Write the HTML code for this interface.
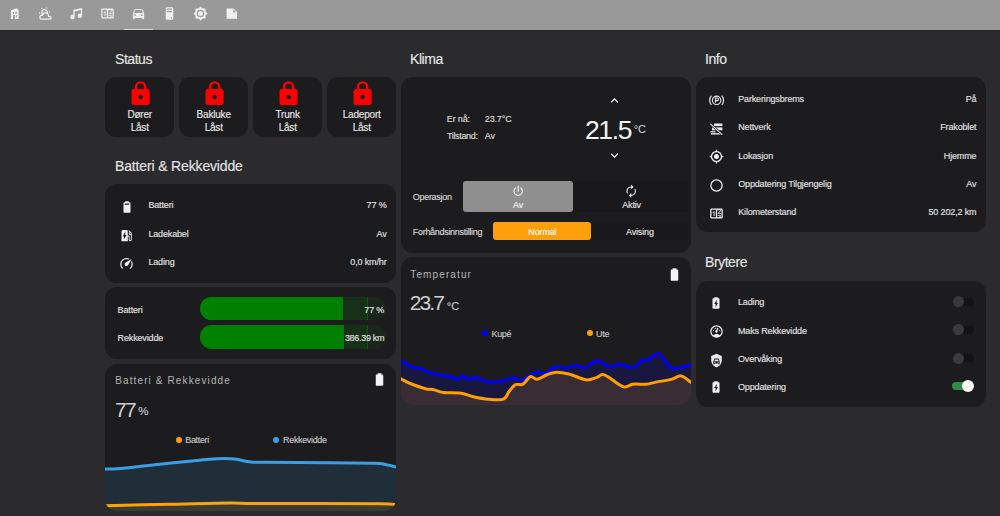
<!DOCTYPE html>
<html><head><meta charset="utf-8">
<style>
*{margin:0;padding:0;box-sizing:border-box}
html,body{width:1000px;height:516px;overflow:hidden;background:#2b2b2d;font-family:"Liberation Sans",sans-serif;color:#e1e1e1}
.a{position:absolute}
.t{position:absolute;white-space:nowrap;line-height:1;-webkit-text-stroke:0.15px currentColor}
.hdr{position:absolute;left:0;top:0;width:1000px;height:30px;background:#999999;border-bottom:1px solid #242426;height:31px}
.hi{position:absolute;width:15px;height:15px;fill:#f0f0f0}
.card{position:absolute;background:#1c1c1e;border-radius:12px;overflow:hidden}
.h{font-size:14px;letter-spacing:-0.45px;color:#e4e4e4}
.s{font-size:9px;color:#e1e1e1;letter-spacing:-0.15px}
.ic{position:absolute;fill:#f0f0f0}
.r{text-align:right}
.mgn{-webkit-text-stroke:0 !important;font-size:10px;letter-spacing:1.12px;color:#b4b4b4}
.big{-webkit-text-stroke:0 !important;font-size:21px;color:#cfcfcf;letter-spacing:-1.6px}
.unit{font-size:12px;color:#c8c8c8}
.dot{width:6px;height:6px;border-radius:50%}
.kl{color:#dcdcdc}
.tgt{-webkit-text-stroke:0 !important;font-size:26.5px;letter-spacing:-1.4px;color:#f4f4f4}
.tgu{-webkit-text-stroke:0 !important;font-size:11px;color:#d8d8d8}
.op{letter-spacing:-0.3px;color:#d8d8d8}
.bt{text-align:center}
.lg{color:#c4c4c4;letter-spacing:-0.35px}
.lk{font-size:10px;line-height:12.8px;text-align:center;color:#e6e6e6;letter-spacing:-0.2px}
</style></head><body>
<div class="hdr">
 <!-- home-city -->
 <svg class="a" style="left:0;top:0;width:30px;height:30px" viewBox="0 0 30 30"><path d="M10.9,10.3L16.6,8.2L18.7,10.3V18.9H10.9Z" fill="#f0f0f0"/><rect x="12.8" y="11.8" width="1.4" height="2" fill="#9b9b9b"/><rect x="15.4" y="11.8" width="1.4" height="2" fill="#9b9b9b"/><rect x="13" y="15" width="2" height="3.9" fill="#9b9b9b"/><rect x="15.9" y="15.2" width="1" height="2" fill="#9b9b9b"/></svg>
 <!-- weather partly cloudy -->
 <svg class="hi" style="left:38px;top:6px" viewBox="0 0 24 24"><path d="M12.74,5.47C15.1,6.5 16.35,9.03 15.92,11.46C17.19,12.56 18,14.19 18,16V16.17C18.31,16.06 18.65,16 19,16A3,3 0 0,1 22,19A3,3 0 0,1 19,22H6A4,4 0 0,1 2,18A4,4 0 0,1 6,14H6.27C5,12.45 4.6,10.24 5.5,8.26C6.72,5.5 9.97,4.24 12.74,5.47M11.93,7.3C10.16,6.5 8.09,7.31 7.31,9.07C6.85,10.09 6.93,11.22 7.41,12.13C8.5,10.83 10.16,10 12,10C12.7,10 13.38,10.12 14,10.34C13.94,9.06 13.18,7.86 11.93,7.3M13.55,3.64C13,3.4 12.45,3.23 11.88,3.12L14.37,1.82L15.27,4.71C14.76,4.29 14.19,3.93 13.55,3.64M6.09,4.44C5.6,4.79 5.17,5.19 4.8,5.63L4.91,2.82L7.87,3.5C7.25,3.71 6.65,4.03 6.09,4.44M18,9.71C17.91,9.12 17.78,8.55 17.59,8L19.97,9.5L17.92,11.73C18.03,11.08 18.05,10.4 18,9.71M3.04,11.3C3.11,11.9 3.24,12.47 3.43,13L1.06,11.5L3.1,9.28C3,9.93 2.97,10.61 3.04,11.3M19,18H16V16A4,4 0 0,0 12,12A4,4 0 0,0 8,16H6A2,2 0 0,0 4,18A2,2 0 0,0 6,20H19A1,1 0 0,0 20,19A1,1 0 0,0 19,18Z"/></svg>
 <svg class="hi" style="left:69px;top:6px" viewBox="0 0 24 24"><path d="M21,3V15.5A3.5,3.5 0 0,1 17.5,19A3.5,3.5 0 0,1 14,15.5A3.5,3.5 0 0,1 17.5,12C18.04,12 18.55,12.12 19,12.34V6.47L9,8.6V17.5A3.5,3.5 0 0,1 5.5,21A3.5,3.5 0 0,1 2,17.5A3.5,3.5 0 0,1 5.5,14C6.04,14 6.55,14.12 7,14.34V6L21,3Z"/></svg>
 <svg class="hi" style="left:100px;top:6px" viewBox="0 0 24 24"><path d="M4,4H20A2,2 0 0,1 22,6V18A2,2 0 0,1 20,20H4A2,2 0 0,1 2,18V6A2,2 0 0,1 4,4M4,6V18H11V6H4M20,18V6H18.76C19,6.54 18.95,7.07 18.95,7.13C18.88,7.8 18.41,8.5 18.24,8.75L15.91,11.3L19.23,11.28L19.24,12.5L14.04,12.47L14,11.47C14,11.47 17.05,8.24 17.2,7.95C17.34,7.67 17.91,6 16.5,6C15.27,6.05 15.41,7.3 15.41,7.3L13.87,7.31C13.87,7.31 13.88,6.65 14.25,6H13V18H15.58L15.57,17.14L16.54,17.13C16.54,17.13 17.45,16.97 17.46,16.08C17.5,15.08 16.65,15.08 16.5,15.08C16.37,15.08 15.43,15.13 15.43,15.95H13.91C13.91,15.95 13.95,13.89 16.5,13.89C19.1,13.89 18.96,15.91 18.96,15.91C18.96,15.91 19,17.16 17.85,17.63L18.37,18H20M8.92,16H7.42V10.2L5.62,10.76V9.53L8.76,8.41H8.92V16Z"/></svg>
 <svg class="hi" style="left:131px;top:6px" viewBox="0 0 24 24"><path d="M5,11L6.5,6.5H17.5L19,11M17.5,16A1.5,1.5 0 0,1 16,14.5A1.5,1.5 0 0,1 17.5,13A1.5,1.5 0 0,1 19,14.5A1.5,1.5 0 0,1 17.5,16M6.5,16A1.5,1.5 0 0,1 5,14.5A1.5,1.5 0 0,1 6.5,13A1.5,1.5 0 0,1 8,14.5A1.5,1.5 0 0,1 6.5,16M18.92,6C18.72,5.42 18.16,5 17.5,5H6.5C5.84,5 5.28,5.42 5.08,6L3,12V20A1,1 0 0,0 4,21H5A1,1 0 0,0 6,20V19H18V20A1,1 0 0,0 19,21H20A1,1 0 0,0 21,20V12L18.92,6Z"/></svg>
 <svg class="hi" style="left:162px;top:6px" viewBox="0 0 24 24"><path d="M8,2H16A2,2 0 0,1 18,4V20A2,2 0 0,1 16,22H8A2,2 0 0,1 6,20V4A2,2 0 0,1 8,2M8,4V6H16V4H8M16,8H8V10H16V8M16,18H14V20H16V18Z"/></svg>
 <svg class="hi" style="left:193px;top:6px" viewBox="0 0 24 24"><path d="M12,8A4,4 0 0,0 8,12A4,4 0 0,0 12,16A4,4 0 0,0 16,12A4,4 0 0,0 12,8M12,18A6,6 0 0,1 6,12A6,6 0 0,1 12,6A6,6 0 0,1 18,12A6,6 0 0,1 12,18M20,8.69V4H15.31L12,0.69L8.69,4H4V8.69L0.69,12L4,15.31V20H8.69L12,23.31L15.31,20H20V15.31L23.31,12L20,8.69Z"/></svg>
 <svg class="a" style="left:220px;top:0;width:24px;height:30px" viewBox="220 0 24 30"><path d="M226.6,8.4H233.4L237,12V18.7H226.6Z" fill="#f0f0f0"/><path d="M233.3,9.6V12.2H235.8Z" fill="#8c8c8c"/></svg>
 <div class="a" style="left:124.3px;top:28.5px;width:29px;height:1.5px;background:#dadada"></div>
</div>

<!-- ============ COLUMN 1 ============ -->
<div class="t h" style="left:115px;top:52px">Status</div>

<div class="card" style="left:105.4px;top:77px;width:68.6px;height:60px;border-radius:11px"></div>
<svg class="a" style="left:126.50px;top:79.5px;width:27.2px;height:27.2px" viewBox="0 0 24 24"><path fill="#ff0000" d="M12,17A2,2 0 0,0 14,15C14,13.89 13.1,13 12,13A2,2 0 0,0 10,15A2,2 0 0,0 12,17M18,8A2,2 0 0,1 20,10V20A2,2 0 0,1 18,22H6A2,2 0 0,1 4,20V10C4,8.89 4.9,8 6,8H7V6A5,5 0 0,1 12,1A5,5 0 0,1 17,6V8H18M12,3A3,3 0 0,0 9,6V8H15V6A3,3 0 0,0 12,3Z"/></svg>
<div class="t lk" style="left:105.4px;width:68.6px;top:109.4px">Dører<br>Låst</div>
<div class="card" style="left:179.4px;top:77px;width:68.6px;height:60px;border-radius:11px"></div>
<svg class="a" style="left:200.50px;top:79.5px;width:27.2px;height:27.2px" viewBox="0 0 24 24"><path fill="#ff0000" d="M12,17A2,2 0 0,0 14,15C14,13.89 13.1,13 12,13A2,2 0 0,0 10,15A2,2 0 0,0 12,17M18,8A2,2 0 0,1 20,10V20A2,2 0 0,1 18,22H6A2,2 0 0,1 4,20V10C4,8.89 4.9,8 6,8H7V6A5,5 0 0,1 12,1A5,5 0 0,1 17,6V8H18M12,3A3,3 0 0,0 9,6V8H15V6A3,3 0 0,0 12,3Z"/></svg>
<div class="t lk" style="left:179.4px;width:68.6px;top:109.4px">Bakluke<br>Låst</div>
<div class="card" style="left:253.4px;top:77px;width:68.6px;height:60px;border-radius:11px"></div>
<svg class="a" style="left:274.50px;top:79.5px;width:27.2px;height:27.2px" viewBox="0 0 24 24"><path fill="#ff0000" d="M12,17A2,2 0 0,0 14,15C14,13.89 13.1,13 12,13A2,2 0 0,0 10,15A2,2 0 0,0 12,17M18,8A2,2 0 0,1 20,10V20A2,2 0 0,1 18,22H6A2,2 0 0,1 4,20V10C4,8.89 4.9,8 6,8H7V6A5,5 0 0,1 12,1A5,5 0 0,1 17,6V8H18M12,3A3,3 0 0,0 9,6V8H15V6A3,3 0 0,0 12,3Z"/></svg>
<div class="t lk" style="left:253.4px;width:68.6px;top:109.4px">Trunk<br>Låst</div>
<div class="card" style="left:327.4px;top:77px;width:68.6px;height:60px;border-radius:11px"></div>
<svg class="a" style="left:348.50px;top:79.5px;width:27.2px;height:27.2px" viewBox="0 0 24 24"><path fill="#ff0000" d="M12,17A2,2 0 0,0 14,15C14,13.89 13.1,13 12,13A2,2 0 0,0 10,15A2,2 0 0,0 12,17M18,8A2,2 0 0,1 20,10V20A2,2 0 0,1 18,22H6A2,2 0 0,1 4,20V10C4,8.89 4.9,8 6,8H7V6A5,5 0 0,1 12,1A5,5 0 0,1 17,6V8H18M12,3A3,3 0 0,0 9,6V8H15V6A3,3 0 0,0 12,3Z"/></svg>
<div class="t lk" style="left:327.4px;width:68.6px;top:109.4px">Ladeport<br>Låst</div>

<div class="t h" style="left:115px;top:158.7px;letter-spacing:-0.15px">Batteri &amp; Rekkevidde</div>

<div class="card" style="left:105.4px;top:184px;width:290.6px;height:99px"></div>
<div class="card" style="left:105.4px;top:287.4px;width:290.6px;height:71.6px"></div>
<div class="card" style="left:105.4px;top:363.5px;width:290.6px;height:147.5px"><svg class="a" style="left:0;top:0" width="290.6" height="147.5" viewBox="105.4 363.5 290.6 147.5">
<path d="M104.0,468.6 C106.7,468.5 110.7,468.8 120.0,468.0 C129.3,467.2 146.7,465.1 160.0,463.7 C173.3,462.3 190.3,460.6 200.0,459.7 C209.7,458.8 212.2,458.4 218.0,458.2 C223.8,458.0 229.7,458.0 235.0,458.5 C240.3,459.0 245.0,460.8 250.0,461.3 C255.0,461.9 252.5,461.7 265.0,461.8 C277.5,461.9 306.7,462.1 325.0,462.2 C343.3,462.3 365.0,462.4 375.0,462.7 C385.0,462.9 381.2,463.0 385.0,463.7 C388.8,464.4 395.8,466.4 398.0,467.0 L398,512 L104,512 Z" fill="#202e3a"/>
<path d="M104.0,505.2 C115.0,505.0 149.0,504.2 170.0,503.8 C191.0,503.4 215.0,502.7 230.0,502.6 C245.0,502.5 235.0,502.9 260.0,503.0 C285.0,503.1 357.0,503.0 380.0,503.3 C403.0,503.6 395.0,504.7 398.0,505.0 L398,512 L104,512 Z" fill="#3a3c34"/>
<path d="M104.0,468.6 C106.7,468.5 110.7,468.8 120.0,468.0 C129.3,467.2 146.7,465.1 160.0,463.7 C173.3,462.3 190.3,460.6 200.0,459.7 C209.7,458.8 212.2,458.4 218.0,458.2 C223.8,458.0 229.7,458.0 235.0,458.5 C240.3,459.0 245.0,460.8 250.0,461.3 C255.0,461.9 252.5,461.7 265.0,461.8 C277.5,461.9 306.7,462.1 325.0,462.2 C343.3,462.3 365.0,462.4 375.0,462.7 C385.0,462.9 381.2,463.0 385.0,463.7 C388.8,464.4 395.8,466.4 398.0,467.0" fill="none" stroke="#3a9ee4" stroke-width="3" stroke-linecap="round" stroke-linejoin="round"/>
<path d="M104.0,505.2 C115.0,505.0 149.0,504.2 170.0,503.8 C191.0,503.4 215.0,502.7 230.0,502.6 C245.0,502.5 235.0,502.9 260.0,503.0 C285.0,503.1 357.0,503.0 380.0,503.3 C403.0,503.6 395.0,504.7 398.0,505.0" fill="none" stroke="#ffa10a" stroke-width="3" stroke-linecap="round" stroke-linejoin="round"/>
</svg></div>
<div class="t mgn" style="left:115.2px;top:375.9px">Batteri &amp; Rekkevidde</div>
<svg class="ic" style="left:372px;top:372.4px;width:15px;height:15px" viewBox="0 0 24 24"><path fill="#f4f4f4" d="M16.67,4H15V2H9V4H7.33A1.33,1.33 0 0,0 6,5.33V20.67C6,21.4 6.6,22 7.33,22H16.67A1.33,1.33 0 0,0 18,20.67V5.33C18,4.6 17.4,4 16.67,4Z"/></svg>
<div class="t big" style="left:115px;top:398.5px">77</div>
<div class="t unit" style="left:138.3px;top:406.2px;font-size:11.5px">%</div>
<div class="a dot" style="left:175.8px;top:436.6px;background:#ffa10a"></div>
<div class="t s lg" style="left:185.3px;top:436px">Batteri</div>
<div class="a dot" style="left:273.3px;top:436.6px;background:#3a9ee4"></div>
<div class="t s lg" style="left:283.1px;top:436px">Rekkevidde</div>


<!-- entities card col1 -->
<svg class="ic" style="left:119.6px;top:200px;width:14px;height:14px" viewBox="0 0 24 24"><path d="M16.67,4C17.4,4 18,4.6 18,5.33V20.67C18,21.4 17.4,22 16.67,22H7.33C6.6,22 6,21.4 6,20.67V5.33C6,4.6 6.6,4 7.33,4H9V2H15V4H16.67M16,8V6H8V8H16Z"/></svg>
<svg class="ic" style="left:119.4px;top:228.1px;width:15px;height:15px" viewBox="0 0 24 24"><path d="M19.77,7.23L19.78,7.22L16.06,3.5L15,4.56L17.11,6.67C16.17,7.03 15.5,7.93 15.5,9A2.5,2.5 0 0,0 18,11.5C18.36,11.5 18.69,11.42 19,11.29V18.5A1,1 0 0,1 18,19.5A1,1 0 0,1 17,18.5V14A2,2 0 0,0 15,12H14V5A2,2 0 0,0 12,3H6A2,2 0 0,0 4,5V21H14V13.5H15.5V18.5A2.5,2.5 0 0,0 18,21A2.5,2.5 0 0,0 20.5,18.5V9C20.5,8.31 20.22,7.68 19.77,7.23M18,10A1,1 0 0,1 17,9A1,1 0 0,1 18,8A1,1 0 0,1 19,9A1,1 0 0,1 18,10M8,18V13.5H6L10,6V11H12L8,18Z"/></svg>
<svg class="ic" style="left:119.35px;top:256px;width:15px;height:15px" viewBox="0 0 24 24"><path d="M12,16A3,3 0 0,1 9,13C9,11.88 9.61,10.9 10.5,10.39L20.21,4.77L14.68,14.35C14.18,15.33 13.17,16 12,16M12,3C13.81,3 15.5,3.5 16.97,4.32L14.87,5.53C14,5.19 13,5 12,5A8,8 0 0,0 4,13C4,15.21 4.89,17.21 6.34,18.65H6.35C6.74,19.04 6.74,19.67 6.35,20.06C5.96,20.45 5.32,20.45 4.93,20.07V20.07C3.12,18.26 2,15.76 2,13A10,10 0 0,1 12,3M22,13C22,15.76 20.88,18.26 19.07,20.07V20.07C18.68,20.45 18.050,20.45 17.66,20.06C17.27,19.67 17.27,19.04 17.66,18.65V18.65C19.11,17.2 20,15.21 20,13C20,12 19.81,11 19.46,10.1L20.67,8C21.5,9.5 22,11.18 22,13Z"/></svg>
<div class="t s" style="left:148.4px;top:201.4px">Batteri</div>
<div class="t s" style="left:148.4px;top:229.5px">Ladekabel</div>
<div class="t s" style="left:148.4px;top:257.9px">Lading</div>
<div class="t s r" style="right:613.5px;top:201.4px">77 %</div>
<div class="t s r" style="right:613.5px;top:229.5px">Av</div>
<div class="t s r" style="right:613.5px;top:257.9px">0,0 km/hr</div>

<!-- bar card -->
<div class="t s" style="left:117.6px;top:305.6px">Batteri</div>
<div class="t s" style="left:117.6px;top:334.1px">Rekkevidde</div>
<div class="a" style="left:199.5px;top:297px;width:186.5px;height:23.4px;border-radius:11.7px;overflow:hidden;background:#1a261b">
  <div class="a" style="left:0;top:0;width:168.3px;height:100%;background:#163117"></div>
  <div class="a" style="left:0;top:0;width:143.7px;height:100%;background:#008000"></div>
  <div class="a" style="left:167.8px;top:0;width:1px;height:100%;background:#0a5a0d"></div>
</div>
<div class="a" style="left:199.5px;top:325.3px;width:186.5px;height:23.4px;border-radius:11.7px;overflow:hidden;background:#1a261b">
  <div class="a" style="left:0;top:0;width:168.3px;height:100%;background:#163117"></div>
  <div class="a" style="left:0;top:0;width:144.4px;height:100%;background:#008000"></div>
  <div class="a" style="left:167.8px;top:0;width:1px;height:100%;background:#0a5a0d"></div>
</div>
<div class="t s r" style="right:615.8px;top:306px">77 %</div>
<div class="t s r" style="right:615.8px;top:334.3px;letter-spacing:-0.3px">386.39 km</div>


<!-- ============ COLUMN 2 ============ -->
<div class="t h" style="left:410px;top:52px">Klima</div>
<div class="card" style="left:400.6px;top:77px;width:290.6px;height:175.5px"></div>
<div class="t s kl" style="left:446.8px;top:114.5px">Er nå:</div>
<div class="t s kl" style="left:484.8px;top:114.6px">23.7°C</div>
<div class="t s kl" style="left:447px;top:131.9px;letter-spacing:-0.35px">Tilstand:</div>
<div class="t s kl" style="left:484.8px;top:131.9px">Av</div>
<svg class="ic" style="left:606.9px;top:93.2px;width:15px;height:15px" viewBox="0 0 24 24"><path d="M7.41,15.41L12,10.83L16.59,15.41L18,14L12,8L6,14L7.41,15.41Z"/></svg>
<svg class="ic" style="left:606.9px;top:147.6px;width:15px;height:15px" viewBox="0 0 24 24"><path d="M7.41,8.58L12,13.17L16.59,8.58L18,10L12,16L6,10L7.41,8.58Z"/></svg>
<div class="t tgt" style="left:585px;top:116.5px">21.5</div>
<div class="t tgu" style="left:633.7px;top:123.6px">°C</div>
<div class="t s op" style="left:412.8px;top:192.9px">Operasjon</div>
<div class="t s op" style="left:412.8px;top:227.6px">Forhåndsinnstilling</div>
<div class="a" style="left:463px;top:181.3px;width:225.2px;height:30.4px;background:#19191b;border-radius:3px"></div>
<div class="a" style="left:463px;top:181.3px;width:110px;height:30.4px;background:#8f8f8f;border-radius:3px"></div>
<svg class="ic" style="left:511.2px;top:183.8px;width:14.4px;height:14.4px" viewBox="0 0 24 24"><path fill="#f2f2f2" d="M16.56,5.44L15.11,6.89C16.84,7.94 18,9.83 18,12A6,6 0 0,1 12,18A6,6 0 0,1 6,12C6,9.83 7.16,7.94 8.88,6.88L7.44,5.44C5.36,6.88 4,9.28 4,12A8,8 0 0,0 12,20A8,8 0 0,0 20,12C20,9.28 18.64,6.88 16.56,5.44M13,3H11V13H13"/></svg>
<div class="t s bt" style="left:463px;width:110px;top:201.1px;color:#f0f0f0">Av</div>
<svg class="ic" style="left:624.4px;top:183.8px;width:14.4px;height:14.4px" viewBox="0 0 24 24"><path fill="#e6e6e6" d="M12,6V9L16,5L12,1V4A8,8 0 0,0 4,12C4,13.57 4.46,15.03 5.24,16.26L6.7,14.8C6.25,13.97 6,13 6,12A6,6 0 0,1 12,6M18.76,7.74L17.3,9.2C17.74,10.04 18,11 18,12A6,6 0 0,1 12,18V15L8,19L12,23V20A8,8 0 0,0 20,12C20,10.43 19.54,8.97 18.76,7.74Z"/></svg>
<div class="t s bt" style="left:573px;width:117.2px;top:201.1px">Aktiv</div>
<div class="a" style="left:493.3px;top:221.9px;width:194.9px;height:18.6px;background:#19191b;border-radius:3px"></div>
<div class="a" style="left:493.3px;top:221.9px;width:98.2px;height:18.6px;background:#ff9f0c;border-radius:3px"></div>
<div class="t s bt" style="left:493.3px;width:98.2px;top:228px;color:#fafafa">Normal</div>
<div class="t s bt" style="left:591.5px;width:96.7px;top:228px">Avising</div>

<div class="card" style="left:400.6px;top:257px;width:290.6px;height:148px"><svg class="a" style="left:0;top:0" width="290.6" height="148" viewBox="400.6 257 290.6 148">
<path d="M398.0,359.5 C398.5,359.8 398.5,359.7 401.0,361.0 C403.5,362.3 410.0,366.3 413.0,367.4 C416.0,368.5 416.8,367.0 419.0,367.7 C421.2,368.4 423.8,370.5 426.5,371.5 C429.2,372.5 432.5,372.9 435.5,373.7 C438.5,374.4 442.2,375.6 444.5,376.0 C446.8,376.4 447.1,375.4 449.0,376.0 C450.9,376.6 453.6,379.3 455.7,379.3 C457.8,379.3 459.4,376.0 461.7,376.0 C463.9,376.0 466.9,379.1 469.2,379.3 C471.4,379.6 473.1,377.4 475.2,377.5 C477.3,377.6 479.4,378.9 482.0,379.7 C484.6,380.5 487.5,382.2 491.0,382.3 C494.5,382.4 499.5,381.2 503.0,380.5 C506.5,379.8 509.5,377.9 512.0,377.8 C514.5,377.7 516.0,379.6 518.0,379.7 C520.0,379.8 521.5,379.8 524.0,378.7 C526.5,377.6 530.8,374.1 533.0,373.0 C535.2,371.9 535.5,372.2 537.5,372.2 C539.5,372.2 542.0,374.1 545.0,373.2 C548.0,372.3 552.3,367.6 555.7,366.8 C559.1,366.0 561.9,368.4 565.3,368.1 C568.7,367.8 572.8,365.2 576.0,365.2 C579.2,365.1 581.3,368.5 584.7,367.8 C588.1,367.1 592.2,360.9 596.4,360.8 C600.6,360.7 606.5,366.7 610.0,367.2 C613.5,367.7 614.0,363.9 617.7,363.9 C621.4,363.9 628.2,367.8 632.2,367.2 C636.2,366.6 639.5,361.1 641.9,360.0 C644.3,358.9 644.3,361.5 646.7,360.4 C649.1,359.3 653.8,354.1 656.4,353.6 C659.0,353.1 659.8,355.1 662.2,357.5 C664.6,359.9 667.9,366.2 671.0,367.8 C674.1,369.4 677.5,367.7 680.7,367.2 C683.9,366.7 688.2,365.2 690.3,364.7 C692.3,364.2 692.5,364.1 693.0,364.0 L693,406 L398,406 Z" fill="#0000ff" fill-opacity="0.15"/>
<path d="M398.0,377.5 C398.5,377.8 399.0,378.0 401.0,379.0 C403.0,380.0 406.0,381.9 410.0,383.5 C414.0,385.1 421.2,387.7 425.0,388.7 C428.8,389.7 429.5,388.9 432.5,389.5 C435.5,390.1 438.2,391.9 443.0,392.5 C447.8,393.1 456.0,392.5 461.0,393.2 C466.0,393.9 468.5,395.7 473.0,396.7 C477.5,397.7 483.0,398.8 488.0,399.2 C493.0,399.6 499.5,400.6 503.0,399.2 C506.5,397.8 507.0,393.4 509.0,391.0 C511.0,388.6 512.8,385.8 515.0,384.7 C517.2,383.6 520.0,385.5 522.5,384.2 C525.0,382.9 527.6,377.5 530.0,376.7 C532.4,375.9 534.0,379.6 536.7,379.3 C539.4,379.0 543.0,376.1 546.0,375.0 C549.0,373.9 551.0,372.6 554.7,372.4 C558.4,372.2 563.1,372.8 568.3,374.0 C573.5,375.2 581.0,379.2 585.7,379.8 C590.4,380.4 593.3,378.2 596.4,377.4 C599.5,376.6 599.8,373.4 604.1,374.9 C608.5,376.4 617.8,385.1 622.5,386.6 C627.2,388.2 628.3,384.6 632.2,384.2 C636.1,383.8 641.9,384.5 645.8,384.2 C649.7,383.9 651.3,382.9 655.5,382.1 C659.7,381.3 666.8,380.4 671.0,379.4 C675.2,378.4 677.5,375.4 680.7,375.9 C683.9,376.3 688.2,380.8 690.3,382.1 C692.3,383.5 692.5,383.7 693.0,384.0 L693,406 L398,406 Z" fill="#ffa500" fill-opacity="0.15"/>
<path d="M398.0,359.5 C398.5,359.8 398.5,359.7 401.0,361.0 C403.5,362.3 410.0,366.3 413.0,367.4 C416.0,368.5 416.8,367.0 419.0,367.7 C421.2,368.4 423.8,370.5 426.5,371.5 C429.2,372.5 432.5,372.9 435.5,373.7 C438.5,374.4 442.2,375.6 444.5,376.0 C446.8,376.4 447.1,375.4 449.0,376.0 C450.9,376.6 453.6,379.3 455.7,379.3 C457.8,379.3 459.4,376.0 461.7,376.0 C463.9,376.0 466.9,379.1 469.2,379.3 C471.4,379.6 473.1,377.4 475.2,377.5 C477.3,377.6 479.4,378.9 482.0,379.7 C484.6,380.5 487.5,382.2 491.0,382.3 C494.5,382.4 499.5,381.2 503.0,380.5 C506.5,379.8 509.5,377.9 512.0,377.8 C514.5,377.7 516.0,379.6 518.0,379.7 C520.0,379.8 521.5,379.8 524.0,378.7 C526.5,377.6 530.8,374.1 533.0,373.0 C535.2,371.9 535.5,372.2 537.5,372.2 C539.5,372.2 542.0,374.1 545.0,373.2 C548.0,372.3 552.3,367.6 555.7,366.8 C559.1,366.0 561.9,368.4 565.3,368.1 C568.7,367.8 572.8,365.2 576.0,365.2 C579.2,365.1 581.3,368.5 584.7,367.8 C588.1,367.1 592.2,360.9 596.4,360.8 C600.6,360.7 606.5,366.7 610.0,367.2 C613.5,367.7 614.0,363.9 617.7,363.9 C621.4,363.9 628.2,367.8 632.2,367.2 C636.2,366.6 639.5,361.1 641.9,360.0 C644.3,358.9 644.3,361.5 646.7,360.4 C649.1,359.3 653.8,354.1 656.4,353.6 C659.0,353.1 659.8,355.1 662.2,357.5 C664.6,359.9 667.9,366.2 671.0,367.8 C674.1,369.4 677.5,367.7 680.7,367.2 C683.9,366.7 688.2,365.2 690.3,364.7 C692.3,364.2 692.5,364.1 693.0,364.0" fill="none" stroke="#0000ff" stroke-width="3" stroke-linecap="round" stroke-linejoin="round"/>
<path d="M398.0,377.5 C398.5,377.8 399.0,378.0 401.0,379.0 C403.0,380.0 406.0,381.9 410.0,383.5 C414.0,385.1 421.2,387.7 425.0,388.7 C428.8,389.7 429.5,388.9 432.5,389.5 C435.5,390.1 438.2,391.9 443.0,392.5 C447.8,393.1 456.0,392.5 461.0,393.2 C466.0,393.9 468.5,395.7 473.0,396.7 C477.5,397.7 483.0,398.8 488.0,399.2 C493.0,399.6 499.5,400.6 503.0,399.2 C506.5,397.8 507.0,393.4 509.0,391.0 C511.0,388.6 512.8,385.8 515.0,384.7 C517.2,383.6 520.0,385.5 522.5,384.2 C525.0,382.9 527.6,377.5 530.0,376.7 C532.4,375.9 534.0,379.6 536.7,379.3 C539.4,379.0 543.0,376.1 546.0,375.0 C549.0,373.9 551.0,372.6 554.7,372.4 C558.4,372.2 563.1,372.8 568.3,374.0 C573.5,375.2 581.0,379.2 585.7,379.8 C590.4,380.4 593.3,378.2 596.4,377.4 C599.5,376.6 599.8,373.4 604.1,374.9 C608.5,376.4 617.8,385.1 622.5,386.6 C627.2,388.2 628.3,384.6 632.2,384.2 C636.1,383.8 641.9,384.5 645.8,384.2 C649.7,383.9 651.3,382.9 655.5,382.1 C659.7,381.3 666.8,380.4 671.0,379.4 C675.2,378.4 677.5,375.4 680.7,375.9 C683.9,376.3 688.2,380.8 690.3,382.1 C692.3,383.5 692.5,383.7 693.0,384.0" fill="none" stroke="#ffa000" stroke-width="3" stroke-linecap="round" stroke-linejoin="round"/>
</svg></div>
<div class="t mgn" style="left:410.3px;top:269.5px">Temperatur</div>
<svg class="ic" style="left:667px;top:266.5px;width:15px;height:15px" viewBox="0 0 24 24"><path fill="#f4f4f4" d="M16.67,4H15V2H9V4H7.33A1.33,1.33 0 0,0 6,5.33V20.67C6,21.4 6.6,22 7.33,22H16.67A1.33,1.33 0 0,0 18,20.67V5.33C18,4.6 17.4,4 16.67,4Z"/></svg>
<div class="t big" style="left:409.8px;top:292px;letter-spacing:-1.9px">23.7</div>
<div class="t unit" style="left:446.8px;top:301.3px;font-size:11px">°C</div>
<div class="a dot" style="left:482.2px;top:330.2px;background:#0000ff"></div>
<div class="t s lg" style="left:491.5px;top:330.1px">Kupé</div>
<div class="a dot" style="left:587px;top:330.2px;background:#ffa000"></div>
<div class="t s lg" style="left:596.1px;top:330.1px">Ute</div>


<!-- ============ COLUMN 3 ============ -->
<div class="t h" style="left:705px;top:52px">Info</div>
<div class="card" style="left:695.6px;top:77px;width:290.6px;height:155.4px"></div>
<div class="t s" style="left:738.2px;top:94.8px">Parkeringsbrems</div>
<div class="t s r" style="right:23.6px;top:94.8px">På</div>
<div class="t s" style="left:738.2px;top:123.3px">Nettverk</div>
<div class="t s r" style="right:23.6px;top:123.3px">Frakoblet</div>
<div class="t s" style="left:738.2px;top:151.7px">Lokasjon</div>
<div class="t s r" style="right:23.6px;top:151.7px">Hjemme</div>
<div class="t s" style="left:738.2px;top:180.1px">Oppdatering Tilgjengelig</div>
<div class="t s r" style="right:23.6px;top:180.1px">Av</div>
<div class="t s" style="left:738.2px;top:208.4px">Kilometerstand</div>
<div class="t s r" style="right:23.6px;top:208.4px">50 202,2 km</div>
<svg class="a" style="left:704px;top:88px;width:26px;height:24px" viewBox="704 88 26 24">
 <circle cx="716.6" cy="100.3" r="4.2" fill="none" stroke="#ececec" stroke-width="1.1"/>
 <path d="M715.4,102.7V97.9H717.2A1.35,1.35 0 0,1 717.2,100.6H715.4" fill="none" stroke="#ececec" stroke-width="1.05"/>
 <path d="M711.4,95.6A7,7 0 0,0 711.4,104.8M721.8,95.6A7,7 0 0,1 721.8,104.8" fill="none" stroke="#e8e8e8" stroke-width="1.2"/>
</svg>
<svg class="a" style="left:704px;top:118px;width:26px;height:22px" viewBox="704 118 26 22">
 <rect x="714" y="123.5" width="8.4" height="2.6" fill="#e8e8e8"/>
 <rect x="712" y="127.4" width="10.4" height="2.9" fill="#e8e8e8"/>
 <rect x="711" y="133.1" width="11.4" height="1.4" fill="#e8e8e8"/>
 <rect x="710.5" y="131.2" width="5" height="1.2" fill="#e8e8e8"/>
 <path d="M710.4,123.9L722.2,134.6" stroke="#1c1c1e" stroke-width="2.2"/>
 <path d="M710.4,123.9L722.2,134.6" stroke="#e8e8e8" stroke-width="1.1"/>
</svg>
<svg class="ic" style="left:709.1px;top:148.6px;width:15px;height:15px" viewBox="0 0 24 24"><path d="M12,8A4,4 0 0,1 16,12A4,4 0 0,1 12,16A4,4 0 0,1 8,12A4,4 0 0,1 12,8M3.05,13H1V11H3.05C3.5,6.83 6.83,3.5 11,3.05V1H13V3.05C17.17,3.5 20.5,6.83 20.95,11H23V13H20.95C20.5,17.170 17.17,20.5 13,20.95V23H11V20.95C6.83,20.5 3.5,17.17 3.05,13M12,5A7,7 0 0,0 5,12A7,7 0 0,0 12,19A7,7 0 0,0 19,12A7,7 0 0,0 12,5Z"/></svg>
<svg class="ic" style="left:709.1px;top:177.5px;width:15px;height:15px" viewBox="0 0 24 24"><path d="M12,20A8,8 0 0,1 4,12A8,8 0 0,1 12,4A8,8 0 0,1 20,12A8,8 0 0,1 12,20M12,2A10,10 0 0,0 2,12A10,10 0 0,0 12,22A10,10 0 0,0 22,12A10,10 0 0,0 12,2Z"/></svg>
<svg class="ic" style="left:709px;top:205.7px;width:15px;height:15px" viewBox="0 0 24 24"><path d="M4,4H20A2,2 0 0,1 22,6V18A2,2 0 0,1 20,20H4A2,2 0 0,1 2,18V6A2,2 0 0,1 4,4M4,6V18H11V6H4M20,18V6H18.76C19,6.54 18.95,7.07 18.95,7.13C18.88,7.8 18.41,8.5 18.24,8.75L15.91,11.3L19.23,11.28L19.24,12.5L14.04,12.47L14,11.47C14,11.47 17.05,8.24 17.2,7.95C17.34,7.67 17.91,6 16.5,6C15.27,6.05 15.41,7.3 15.41,7.3L13.87,7.31C13.870,7.31 13.88,6.65 14.25,6H13V18H15.58L15.57,17.14L16.54,17.13C16.54,17.13 17.45,16.97 17.46,16.08C17.5,15.08 16.65,15.08 16.5,15.08C16.37,15.08 15.43,15.13 15.43,15.95H13.91C13.91,15.95 13.95,13.89 16.5,13.89C19.1,13.89 18.96,15.91 18.96,15.91C18.96,15.91 19,17.16 17.85,17.63L18.37,18H20M8.92,16H7.42V10.2L5.62,10.76V9.53L8.76,8.41H8.92V16Z"/></svg>
<div class="t h" style="left:705px;top:254.6px">Brytere</div>
<div class="card" style="left:695.6px;top:280.5px;width:290.6px;height:126.5px"></div>
<div class="t s" style="left:738px;top:298.3px">Lading</div>
<div class="a" style="left:952.8px;top:297.5px;width:20.8px;height:8px;border-radius:4px;background:#131315"></div>
<div class="a" style="left:952.9px;top:296.0px;width:11px;height:11px;border-radius:50%;background:#3a3a3c"></div>
<div class="t s" style="left:738px;top:326.6px">Maks Rekkevidde</div>
<div class="a" style="left:952.8px;top:325.6px;width:20.8px;height:8px;border-radius:4px;background:#131315"></div>
<div class="a" style="left:952.9px;top:324.1px;width:11px;height:11px;border-radius:50%;background:#3a3a3c"></div>
<div class="t s" style="left:738px;top:354.9px">Overvåking</div>
<div class="a" style="left:952.8px;top:354.0px;width:20.8px;height:8px;border-radius:4px;background:#131315"></div>
<div class="a" style="left:952.9px;top:352.5px;width:11px;height:11px;border-radius:50%;background:#3a3a3c"></div>
<div class="t s" style="left:738px;top:383.2px">Oppdatering</div>
<div class="a" style="left:951.9px;top:382.4px;width:20.8px;height:8px;border-radius:4px;background:#2f8a45"></div>
<div class="a" style="left:962.0px;top:380.4px;width:12px;height:12px;border-radius:50%;background:#fafafa"></div>
<svg class="ic" style="left:709.3px;top:296px;width:14px;height:14px" viewBox="0 0 24 24"><path d="M16.67,4H15V2H9V4H7.33A1.33,1.33 0 0,0 6,5.33V20.67C6,21.4 6.6,22 7.33,22H16.67A1.33,1.33 0 0,0 18,20.67V5.33C18,4.6 17.4,4 16.67,4Z"/><path fill="#1c1c1e" d="M13.3,6.5L9,13.8H11.3V19.5L15.3,12.2H12.9Z"/></svg>
<svg class="ic" style="left:709.3px;top:380.3px;width:14px;height:14px" viewBox="0 0 24 24"><path d="M16.67,4H15V2H9V4H7.33A1.33,1.33 0 0,0 6,5.33V20.67C6,21.4 6.6,22 7.33,22H16.67A1.33,1.33 0 0,0 18,20.67V5.33C18,4.6 17.4,4 16.67,4Z"/><path fill="#1c1c1e" d="M13.3,6.5L9,13.8H11.3V19.5L15.3,12.2H12.9Z"/></svg>
<svg class="ic" style="left:709px;top:323.8px;width:15px;height:15px" viewBox="0 0 24 24"><path d="M12,2A10,10 0 0,0 2,12A10,10 0 0,0 12,22A10,10 0 0,0 22,12A10,10 0 0,0 12,2M12,4A8,8 0 0,1 20,12C20,14.4 19,16.5 17.3,18C15.9,16.7 14,16 12,16C10,16 8.2,16.7 6.7,18C5,16.5 4,14.4 4,12A8,8 0 0,1 12,4M14,5.89C13.62,5.9 13.26,6.15 13.1,6.54L11.81,9.77L11.71,10C11,10.13 10.41,10.6 10.14,11.26C9.73,12.29 10.23,13.45 11.26,13.86C12.29,14.27 13.45,13.77 13.86,12.74C14.12,12.08 14,11.32 13.57,10.76L13.67,10.5L14.96,7.29L14.97,7.26C15.17,6.75 14.92,6.17 14.41,5.96C14.28,5.91 14.15,5.89 14,5.89M10,6A1,1 0 0,0 9,7A1,1 0 0,0 10,8A1,1 0 0,0 11,7A1,1 0 0,0 10,6M7,9A1,1 0 0,0 6,10A1,1 0 0,0 7,11A1,1 0 0,0 8,10A1,1 0 0,0 7,9M17,9A1,1 0 0,0 16,10A1,1 0 0,0 17,11A1,1 0 0,0 18,10A1,1 0 0,0 17,9Z"/></svg>
<svg class="a" style="left:709px;top:352.6px;width:15px;height:15px" viewBox="0 0 24 24">
 <path d="M12,1L3.5,4.8V11C3.5,16.5 7.2,21.4 12,22.8C16.8,21.4 20.5,16.5 20.5,11V4.8Z" fill="#e8e8e8"/>
 <path d="M8.6,8.8H15.4L17,13.2V18H15V16.8H9V18H7V13.2Z" fill="#1c1c1e"/>
 <path d="M9.6,10.2H14.4L15.4,13H8.6Z" fill="#e8e8e8"/>
 <circle cx="9.4" cy="14.8" r="0.9" fill="#e8e8e8"/><circle cx="14.6" cy="14.8" r="0.9" fill="#e8e8e8"/>
</svg>

</body></html>
